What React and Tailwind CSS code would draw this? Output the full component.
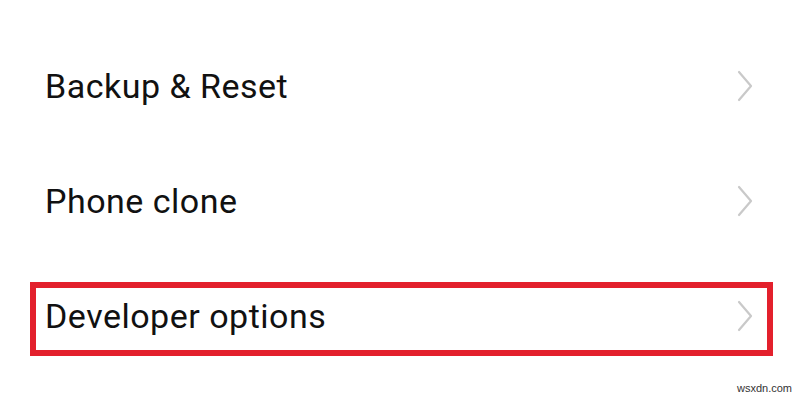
import React from "react";

function Chevron() {
  return (
    <svg width="18" height="32" viewBox="0 0 18 32" className="shrink-0">
      <path d="M3 2 L15 16 L3 30" fill="none" stroke="#c9c9c9" strokeWidth="2.2" strokeLinecap="round" strokeLinejoin="round" />
    </svg>
  );
}

function Row({ label }) {
  return (
    <div className="flex h-[115px] items-center justify-between pl-[45px] pr-[46px]">
      <span className="text-[34px] leading-none tracking-[0.5px] text-[#111111]">
        {label}
      </span>
      <Chevron />
    </div>
  );
}

export default function App() {
  return (
    <div
      className="relative h-[402px] w-[800px] overflow-hidden bg-white pt-[28px]"
      style={{ fontFamily: "Roboto, 'Noto Sans', sans-serif" }}
    >
      <Row label="Backup & Reset" />
      <Row label="Phone clone" />
      <Row label="Developer options" />
      <div className="pointer-events-none absolute left-[30px] top-[282px] h-[74px] w-[743px] border-[6px] border-[#e3202c]" />
      <div className="absolute bottom-[6px] right-[8px] text-[11px] text-[#333]" style={{ fontFamily: "'Liberation Sans', Arial, sans-serif" }}>
        wsxdn.com
      </div>
    </div>
  );
}
